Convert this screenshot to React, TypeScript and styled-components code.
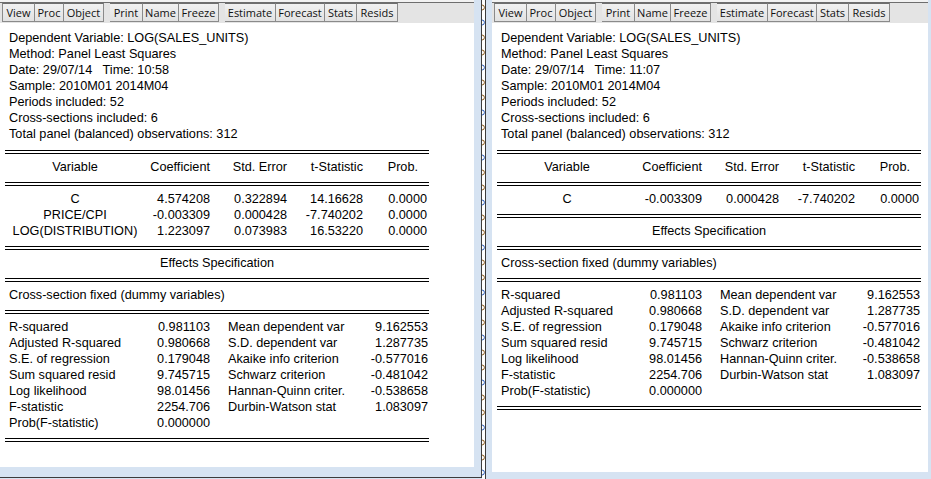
import React from "react";
import styled, { createGlobalStyle } from "styled-components";

const Global = createGlobalStyle`
  html, body { margin: 0; padding: 0; }
  body { width: 931px; height: 479px; overflow: hidden; background: #d6e3f2; }
`;

const Desktop = styled.div`
  display: flex;
  align-items: flex-start;
  width: 931px;
  height: 479px;
  background: #d6e3f2;
  font-family: "Liberation Sans", Arial, sans-serif;
  color: #000;
`;

const LeftWindow = styled.div`
  box-sizing: border-box;
  width: 482px;
  height: 478px;
  padding: 0 7px 10px 0;
  border-right: 1px solid #3c3c3c;
  border-bottom: 1px solid #3c3c3c;
  display: flex;
  flex-direction: column;
`;

const RightWindow = styled.div`
  box-sizing: border-box;
  flex: 1;
  height: 479px;
  padding: 0 3px 7px 6px;
  display: flex;
  flex-direction: column;
`;

const Strip = styled.div`
  box-sizing: border-box;
  width: 4px;
  height: 479px;
  overflow: hidden;
  background: #fff;
  border-right: 1px solid #3c3c3c;
  svg {
    display: block;
  }
`;

const Toolbar = styled.div`
  box-sizing: border-box;
  height: 23px;
  display: flex;
  align-items: flex-start;
  padding-left: 2px;
  background: #e4e4e4;
  border-top: 2px solid #f2f2f2;
  box-shadow: inset 0 1px 0 #6e6e6e;
  padding-top: 1px;
  font-family: "Open Sans", "Noto Sans", sans-serif;
  font-size: 11px;
`;

const Button = styled.div<{ $w: number; $gap?: boolean }>`
  box-sizing: border-box;
  width: ${(p) => p.$w}px;
  height: 19px;
  margin-left: ${(p) => (p.$gap ? 6 : 0)}px;
  display: flex;
  align-items: center;
  justify-content: center;
  background: linear-gradient(#f1f1f1, #e2e2e2);
  border: 1px solid #8a8a8a;
  border-top-color: #6e6e6e;
  color: #111;
  line-height: 1;
  & + & {
    border-left-width: ${(p) => (p.$gap ? 1 : 0)}px;
  }
`;

const Body = styled.div`
  flex: 1;
  background: #fff;
  padding: 7px 0 0 5px;
  font-size: 12.7px;
  line-height: 16px;
`;

const Intro = styled.div`
  padding: 0 0 8px 4px;
`;

const Line = styled.div`
  white-space: pre;
`;

const Rule = styled.div`
  box-sizing: border-box;
  width: 424px;
  height: 4px;
  border-top: 1px solid #000;
  border-bottom: 1px solid #000;
`;

const Section = styled.div`
  width: 424px;
  padding: 5px 0 7px;
`;

const CoefGrid = styled.div`
  display: grid;
  grid-template-columns: 140px 65px 77px 76px 64px;
`;

const Cell = styled.div<{ $align?: "left" | "center" | "right"; $pr?: number }>`
  text-align: ${(p) => p.$align ?? "right"};
  padding-right: ${(p) => p.$pr ?? 0}px;
  white-space: pre;
`;

const Centered = styled.div`
  text-align: center;
`;

const Note = styled.div`
  padding-left: 4px;
`;

const StatsGrid = styled.div`
  display: grid;
  grid-template-columns: 131px 70px 136px 82px;
  padding-left: 4px;
`;

const StatLabel = styled.div<{ $indent?: number }>`
  padding-left: ${(p) => p.$indent ?? 0}px;
  white-space: pre;
`;

const StatValue = styled.div`
  text-align: right;
`;

const tools: { label: string; w: number; gap?: boolean }[] = [
  { label: "View", w: 33 },
  { label: "Proc", w: 29 },
  { label: "Object", w: 40 },
  { label: "Print", w: 33, gap: true },
  { label: "Name", w: 36 },
  { label: "Freeze", w: 40 },
  { label: "Estimate", w: 51, gap: true },
  { label: "Forecast", w: 49 },
  { label: "Stats", w: 32 },
  { label: "Resids", w: 41 },
];

type Coef = [string, string, string, string, string];

const stats: [string, string, string, string][] = [
  ["R-squared", "0.981103", "Mean dependent var", "9.162553"],
  ["Adjusted R-squared", "0.980668", "S.D. dependent var", "1.287735"],
  ["S.E. of regression", "0.179048", "Akaike info criterion", "-0.577016"],
  ["Sum squared resid", "9.745715", "Schwarz criterion", "-0.481042"],
  ["Log likelihood", "98.01456", "Hannan-Quinn criter.", "-0.538658"],
  ["F-statistic", "2254.706", "Durbin-Watson stat", "1.083097"],
  ["Prob(F-statistic)", "0.000000", "", ""],
];

// clipped glyph edges of the window stacked behind the two outputs
const GlyphEdges: React.FC = () => (
  <svg width="3" height="479" viewBox="0 0 3 479">
    {Array.from({ length: 32 }, (_, i) => {
      const y = 5 + i * 15;
      return (
        <path
          key={i}
          d={`M0 ${y} Q2.4 ${y} 2.4 ${y + 2.5} Q2.4 ${y + 5} 0 ${y + 5}`}
          fill="none"
          stroke={i % 3 === 1 ? "#2a5cb8" : "#8a5a1c"}
          strokeWidth="1"
        />
      );
    })}
  </svg>
);

const ToolBar: React.FC = () => (
  <Toolbar>
    {tools.map((t) => (
      <Button key={t.label} $w={t.w} $gap={t.gap}>
        {t.label}
      </Button>
    ))}
  </Toolbar>
);

const Output: React.FC<{ time: string; coefs: Coef[] }> = ({ time, coefs }) => (
  <Body>
    <Intro>
      <Line>Dependent Variable: LOG(SALES_UNITS)</Line>
      <Line>Method: Panel Least Squares</Line>
      <Line>{`Date: 29/07/14   Time: ${time}`}</Line>
      <Line>Sample: 2010M01 2014M04</Line>
      <Line>Periods included: 52</Line>
      <Line>Cross-sections included: 6</Line>
      <Line>Total panel (balanced) observations: 312</Line>
    </Intro>

    <Rule />
    <Section>
      <CoefGrid>
        <Cell $align="center">Variable</Cell>
        <Cell>Coefficient</Cell>
        <Cell>Std. Error</Cell>
        <Cell>t-Statistic</Cell>
        <Cell $pr={9}>Prob.</Cell>
      </CoefGrid>
    </Section>

    <Rule />
    <Section>
      <CoefGrid>
        {coefs.map((row) =>
          row.map((v, i) => (
            <Cell key={row[0] + i} $align={i === 0 ? "center" : "right"}>
              {v}
            </Cell>
          ))
        )}
      </CoefGrid>
    </Section>

    <Rule />
    <Section>
      <Centered>Effects Specification</Centered>
    </Section>

    <Rule />
    <Section>
      <Note>Cross-section fixed (dummy variables)</Note>
    </Section>

    <Rule />
    <Section>
      <StatsGrid>
        {stats.map((r) => (
          <React.Fragment key={r[0]}>
            <StatLabel>{r[0]}</StatLabel>
            <StatValue>{r[1]}</StatValue>
            <StatLabel $indent={18}>{r[2]}</StatLabel>
            <StatValue>{r[3]}</StatValue>
          </React.Fragment>
        ))}
      </StatsGrid>
    </Section>
    <Rule />
  </Body>
);

const App: React.FC = () => (
  <>
    <Global />
    <Desktop>
      <LeftWindow>
        <ToolBar />
        <Output
          time="10:58"
          coefs={[
            ["C", "4.574208", "0.322894", "14.16628", "0.0000"],
            ["PRICE/CPI", "-0.003309", "0.000428", "-7.740202", "0.0000"],
            ["LOG(DISTRIBUTION)", "1.223097", "0.073983", "16.53220", "0.0000"],
          ]}
        />
      </LeftWindow>
      <Strip>
        <GlyphEdges />
      </Strip>
      <RightWindow>
        <ToolBar />
        <Output
          time="11:07"
          coefs={[["C", "-0.003309", "0.000428", "-7.740202", "0.0000"]]}
        />
      </RightWindow>
    </Desktop>
  </>
);

export default App;
